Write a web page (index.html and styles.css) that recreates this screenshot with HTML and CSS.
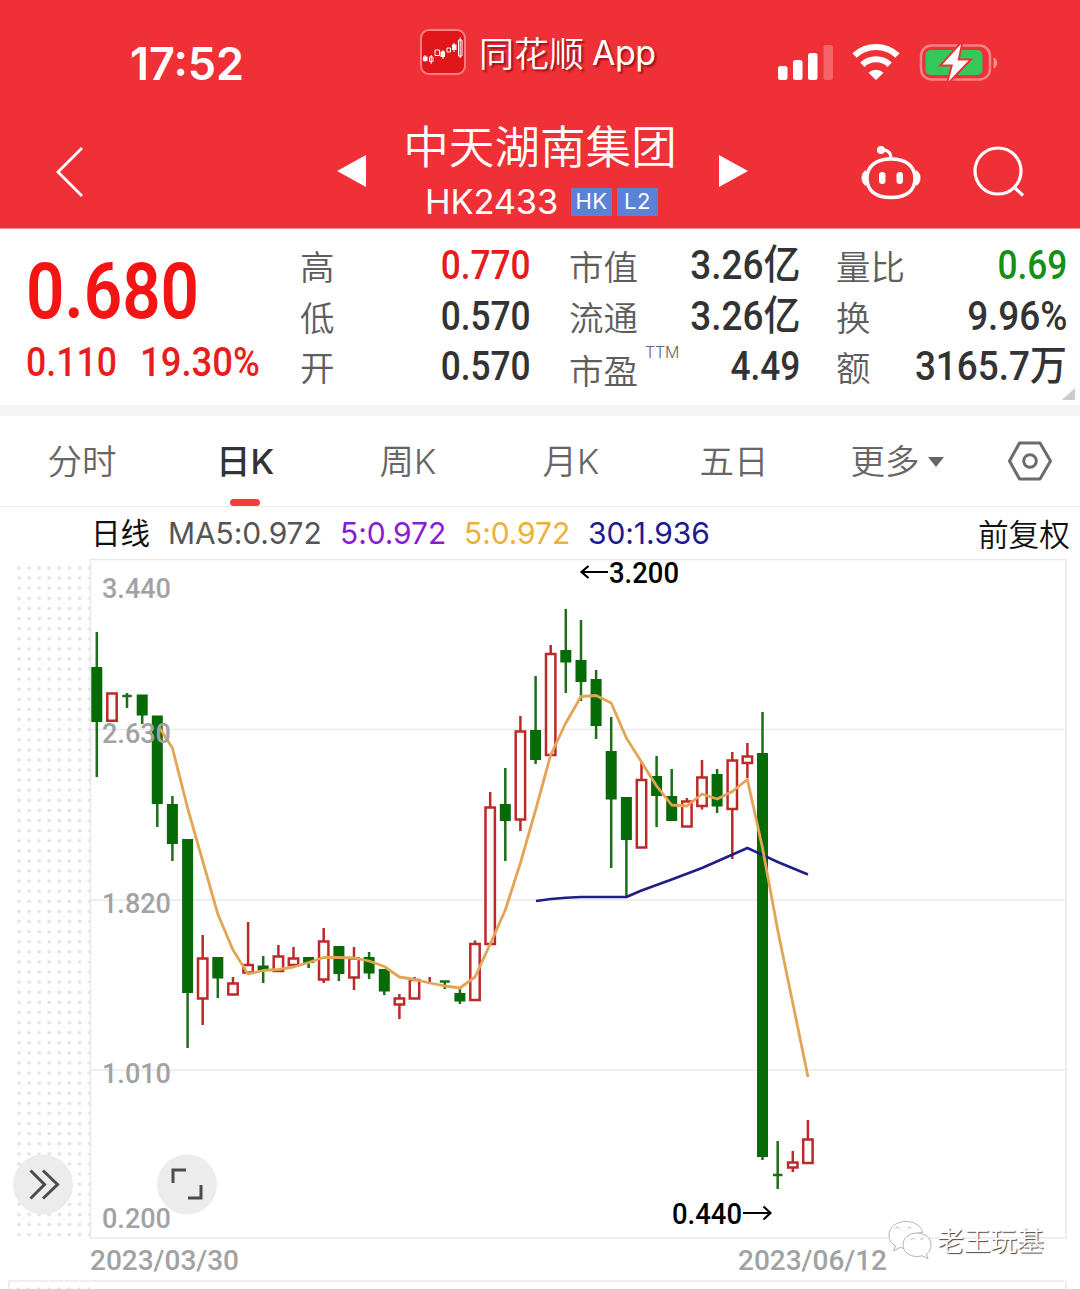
FILE: index.html
```html
<!DOCTYPE html>
<html lang="zh-CN">
<head>
<meta charset="utf-8">
<title>中天湖南集团 HK2433</title>
<link rel="stylesheet" href="styles.css">
</head>
<body>
<header class="header">
  <div class="status">
    <div class="clock">17:52</div>
    <div class="brand">
      <svg class="logo" width="46" height="46" viewBox="0 0 46 46">
        <rect x="1" y="1" width="44" height="44" rx="8" fill="#e0161b" stroke="#fb7f80" stroke-width="2"/>
        <path d="M5 26v7M23 21v9M34 14v9" stroke="#fff" stroke-width="1"/>
        <path d="M3 27.500h4.500v4.500H3zM20.500 22.500h4.500v5.500h-4.500zM32 15.500h4.500v5.500H32z" fill="#fff"/>
        <path d="M9.500 28h3.500v4.500H9.500zM15 21h4.500v5.500H15zM27 19h3.500v4h-3.500zM38.500 11h3.500v16h-3.500zM11.200 26v9M40.200 8.500v20.500" fill="none" stroke="#fff" stroke-width="1"/>
      </svg>
      <span class="brand-name">同花顺</span><span class="brand-app">App</span>
    </div>
    <svg class="indicators" width="222" height="44" viewBox="0 0 222 44">
      <g fill="#fff">
        <rect x="0" y="24" width="9.500" height="14" rx="2.500"/>
        <rect x="15" y="18" width="9.500" height="20" rx="2.500"/>
        <rect x="30" y="11" width="9.500" height="27" rx="2.500"/>
        <rect x="45.500" y="3" width="9.500" height="35" rx="2.500" opacity=".25"/>
        <path d="M98 38l-7.500-7.300a11 11 0 0 1 15 0z"/>
      </g>
      <g fill="none" stroke="#fff" stroke-width="6.200">
        <path d="M76.500 13.500a31.500 31.500 0 0 1 43 0"/>
        <path d="M84.300 22.700a20 20 0 0 1 27.400 0"/>
      </g>
      <rect x="143" y="3.500" width="69" height="34" rx="10.500" fill="none" stroke="#fff" stroke-opacity=".4" stroke-width="2.500"/>
      <rect x="147.500" y="8" width="57" height="25" rx="5" fill="#34c759"/>
      <path d="M215.500 15.500c5 1.500 5 9.500 0 11z" fill="#fff" opacity=".45"/>
      <path d="M183 2L164.500 22.500h10.500l-4.500 17L190.500 18.500h-11z" fill="#fff" stroke="#ef3037" stroke-width="4" paint-order="stroke"/>
    </svg>
  </div>
  <nav class="nav">
    <svg class="back" width="30" height="52" viewBox="0 0 30 52"><path d="M27 2L3 26l24 24" fill="none" stroke="#fff" stroke-width="2.800"/></svg>
    <svg class="prev" width="29" height="32" viewBox="0 0 29 32"><path d="M29 0v32L0 16z" fill="#fff"/></svg>
    <div class="title">
      <h1>中天湖南集团</h1>
      <div class="code"><span class="ticker">HK2433</span><span class="tag">HK</span><span class="tag">L2</span></div>
    </div>
    <svg class="next" width="29" height="32" viewBox="0 0 29 32"><path d="M0 0v32l29-16z" fill="#fff"/></svg>
    <svg class="robot" width="60" height="56" viewBox="0 0 60 56">
      <g fill="none" stroke="#fff" stroke-width="3.500">
        <path d="M30 14c16 0 24 8 24 19.500S46 52.500 30 52.500 6 45 6 33.500 14 14 30 14z"/>
        <path d="M20 4.500c6 0 10 2 10 9" stroke-width="3"/>
      </g>
      <circle cx="20" cy="5" r="4" fill="#fff"/>
      <path d="M5 25c-6 3-6 13 0 16zM55 25c6 3 6 13 0 16z" fill="#fff"/>
      <rect x="18" y="27" width="6.500" height="12" rx="3.200" fill="#fff"/>
      <rect x="35.500" y="27" width="6.500" height="12" rx="3.200" fill="#fff"/>
    </svg>
    <svg class="search" width="52" height="52" viewBox="0 0 52 52"><g fill="none" stroke="#fff" stroke-width="3.200"><circle cx="25" cy="25" r="23"/><path d="M41 41l9 8.500"/></g></svg>
  </nav>
</header>

<section class="quote">
  <div class="price">
    <div class="last"><span class="num num-xl">0.680</span></div>
    <div class="change"><span class="num num-l">0.110</span><span class="num num-l pct">19.30%</span></div>
  </div>
  <dl class="stats stats-a">
    <div><dt>高</dt><dd class="num up">0.770</dd></div>
    <div><dt>低</dt><dd class="num">0.570</dd></div>
    <div><dt>开</dt><dd class="num">0.570</dd></div>
  </dl>
  <dl class="stats stats-b">
    <div><dt>市值</dt><dd class="num unit">3.26亿</dd></div>
    <div><dt>流通</dt><dd class="num unit">3.26亿</dd></div>
    <div><dt class="low">市盈<sup>TTM</sup></dt><dd class="num">4.49</dd></div>
  </dl>
  <dl class="stats stats-c">
    <div><dt>量比</dt><dd class="num down">0.69</dd></div>
    <div><dt>换</dt><dd class="num unit">9.96%</dd></div>
    <div><dt>额</dt><dd class="num unit">3165.7万</dd></div>
  </dl>
  <i class="corner"></i>
</section>

<div class="tabs">
  <span>分时</span>
  <span class="active">日K</span>
  <span>周K</span>
  <span>月K</span>
  <span>五日</span>
  <span>更多<i class="caret"></i></span>
  <svg width="46" height="42" viewBox="0 0 46 42"><g fill="none" stroke="#6b6b6b" stroke-width="3"><path d="M12.500 3h20.500l10.500 18L33 39H12.500L2.500 21z" stroke-linejoin="round"/><circle cx="23" cy="21" r="6.300"/></g></svg>
</div>

<div class="legend">
  <span class="period">日线</span>
  <span class="ma">MA5:0.972</span>
  <span class="ma violet">5:0.972</span>
  <span class="ma amber">5:0.972</span>
  <span class="ma navy">30:1.936</span>
  <span class="adjust">前复权</span>
</div>

<section class="chart">
  <svg class="plot" width="1080" height="731" viewBox="0 558 1080 731">
    <defs>
      <pattern id="dots" x="14" y="563" width="10.100" height="10.100" patternUnits="userSpaceOnUse"><circle cx="5" cy="5" r="1.900" fill="#e4e4e4"/></pattern>
    </defs>
    <rect x="14" y="563" width="76" height="675" fill="url(#dots)"/>
    <path d="M14 1288.500H90" stroke="#e4e4e4" stroke-width="2" stroke-dasharray="3 7.100" stroke-dashoffset="-3"/>
    <path d="M90.500 559.500H1066V1238H90.500zM90 729.500H1066M90 900H1066M90 1070H1066M9 1289V1281H1064M1066 1281V1289" fill="none" stroke="#e9e9e9" stroke-width="1.600"/>

    <!-- falling days: wicks, then bodies -->
    <path class="fall" d="M96.800 632V777M127 693V708M142.200 700V724M157.300 720V827M172.400 796V861M187.600 845V1048M217.800 960V998M263.200 956V983M308.600 958V968M338.900 950V981M369.100 952V979M384.300 970V995M444.800 981V989M459.900 989V1004M505.300 768V861M535.600 676V764M565.800 609V693M581 620V701M596.100 670V739M611.200 717V868M626.400 800V896M656.600 756V827M671.700 769V820M717.100 769V813M762.500 712V1160M777.700 1141V1189"/>
    <path class="fall-body" d="M96.800 667V722M142.200 694.500V715.500M157.300 715.500V804M172.400 804V844M187.600 839V993M217.800 957V978.500M263.200 965.500V971M308.600 957V963M338.900 946V974M369.100 957V973.500M384.300 969V991.500M459.900 993V1001.500M505.300 804V821M535.600 730V760M565.800 650V662.500M581 660V682M596.100 679V726M611.200 751V799.500M626.400 797V840M656.600 776V796M671.700 796V821M717.100 774V806.500M762.500 753V1157"/>
    <path class="fall" d="M122.300 696H131.800M439.800 981.500H449.800M773 1175H782.500"/>

    <!-- rising days: wicks, then hollow bodies -->
    <path class="rise" d="M202.700 935V958M202.700 999V1025M233 977V983M248.100 922V965M278.400 945V956M293.500 947V958M323.700 928V941M323.700 980V983M354 947V958M354 978V990M399.400 994V998M399.400 1005V1019M414.500 977V980M429.700 977V984M475 940.500V944M490.200 792V807M520.400 716V731M520.400 820V831M550.700 645V654M641.500 761V780M686.900 798V801M702 760V777M702 807V809.500M732.300 752V760M732.300 810V859M747.400 743V757M747.400 764V778M792.800 1151V1162M792.800 1168V1172M807.900 1120V1139"/>
    <path class="rise" d="M107.300 693.500h9.400v27.300h-9.400zM198 958.500h9.400v40h-9.400zM228.300 983.500h9.400v11h-9.400zM243.400 965h9.400v7.500h-9.400zM273.700 956.500h9.400v14.500h-9.400zM288.800 958.500h9.400v6.500h-9.400zM319 941.500h9.400v38h-9.400zM349.300 958.500h9.400v19h-9.400zM394.700 998.500h9.400v6h-9.400zM409.800 980h9.400v18.500h-9.400zM470.300 944h9.400v56h-9.400zM485.500 807.500h9.400v136.500h-9.400zM515.700 731.500h9.400v88h-9.400zM546 654h9.400v101h-9.400zM636.800 780h9.400v67.500h-9.400zM682.200 801.500h9.400v25h-9.400zM697.300 777.500h9.400v28.500h-9.400zM727.600 760.500h9.400v48.500h-9.400zM742.700 756.500h9.400v6.500h-9.400zM788.100 1162.500h9.400v5h-9.400zM803.200 1139.500h9.400v23.500h-9.400z"/>

    <path class="ma30-line" d="M536 901L551 899Q566 897.500 581 897L626.400 897L641.500 890.500L671.700 879.500L702 868L747.400 848L777.700 862L808 874.500"/>
    <path class="ma5-line" d="M159 727L172.400 748L187.600 808L202.700 861L217.800 914L233 950L248.100 974L263.200 970.500L278.400 969.500L293.500 967L308.600 962.500L323.700 957.500L338.900 957.500L354 958L369.100 961L384.300 966.500L399.400 977L414.500 979.500L429.700 983L444.800 986L459.900 988L475 977L490.200 944L505.300 910L520.400 863L535.600 810L550.700 755L565.800 723L581 696.500L596.100 695.500L611.200 703L626.400 738L641.500 762L656.600 786L671.700 805L686.900 806L702 794L717.100 799L732.300 791.500L747.400 779.500L762.500 848L777.700 930L808 1077"/>

    <g class="axis">
      <text x="102" y="597.500" textLength="69" lengthAdjust="spacingAndGlyphs">3.440</text>
      <text x="102" y="742.500" textLength="69" lengthAdjust="spacingAndGlyphs">2.630</text>
      <text x="102" y="912.500" textLength="69" lengthAdjust="spacingAndGlyphs">1.820</text>
      <text x="102" y="1083" textLength="69" lengthAdjust="spacingAndGlyphs">1.010</text>
      <circle cx="187" cy="1184.500" r="30" fill="#ececec"/>
      <text x="102" y="1228" textLength="69" lengthAdjust="spacingAndGlyphs">0.200</text>
      <text x="90" y="1270" textLength="149" lengthAdjust="spacingAndGlyphs">2023/03/30</text>
      <text x="738" y="1270" textLength="149" lengthAdjust="spacingAndGlyphs">2023/06/12</text>
    </g>
    <g class="extreme">
      <text x="609" y="583" textLength="70" lengthAdjust="spacingAndGlyphs">3.200</text>
      <text x="672" y="1223.500" textLength="70" lengthAdjust="spacingAndGlyphs">0.440</text>
      <path d="M608 572H582M588.500 566L581.500 572L588.500 578M743 1213H769M763.500 1206.500L770.500 1213L763.500 1219.500"/>
    </g>

    <circle cx="43" cy="1184.500" r="30" fill="#ececec"/>
    <g fill="none" stroke="#4c4c4c" stroke-width="3">
      <path d="M30.500 1170.500L44.500 1184.500L30.500 1198.500M43 1170.500L57.500 1184.500L43 1198.500"/>
      <path d="M173 1183V1170H186M201 1185V1198H188"/>
    </g>

    <g class="wechat">
      <path d="M906 1221.500c-10 0-17 6-17 13.500 0 5 2.500 8.500 6.500 11l-2 5 6.500-3.500c2 .6 4 .8 6 .8l1-.2c-1-8 6-15.500 15.500-15.500-1-6.500-8-11.100-16.500-11.100z"/>
      <path d="M917 1233c-8 0-14 5.200-14 11.800s6 11.700 14 11.700c2 0 3.500-.3 5-.8l6 3-1.500-4.700c3-2.300 4.500-5.500 4.500-9.200 0-6.600-6-11.800-14-11.800z"/>
      <path d="M895.500 1228.500q2-3 4 0M907.500 1228.500q2-3 4 0M911 1239.500q1.500-2.500 3.500 0M920 1239.500q1.500-2.500 3.500 0"/>
    </g>
    <text class="watermark" x="937" y="1251" textLength="107">老王玩基</text>
  </svg>
</section>
</body>
</html>
```
FILE: styles.css
```css
* { box-sizing: border-box; }
body {
  margin: 0;
  width: 1080px;
  height: 1289px;
  overflow: hidden;
  background: #fff;
  color: #333;
  font-family: Inter, "Noto Sans CJK SC", sans-serif;
}
h1, dl, dd { margin: 0; }
svg { display: block; flex: none; }

/* header */
.header { height: 229px; background: #ef3037; color: #fff; border-bottom: 1px solid #f58a8e; }
.status {
  display: grid;
  grid-template-columns: 290px 357px 1fr;
  padding: 29px 0 0 130px;
  height: 119px;
  align-items: start;
}
.clock { padding-top: 13px; font-size: 45px; line-height: 44px; font-weight: 600; }
.brand { display: flex; align-items: flex-start; }
.brand-name, .brand-app { font-size: 35px; line-height: 46px; text-shadow: 2px 2px 2px rgba(90, 0, 0, .6); }
.brand-name { margin-left: 13px; font-family: "Noto Sans CJK SC", sans-serif; font-weight: 350; }
.brand-app { margin-left: 8px; padding-top: 1px; font-size: 34px; letter-spacing: -.5px; }
.indicators { margin: 13px 0 0 1px; }
.nav {
  display: grid;
  grid-template-columns: 282px 29px 353px 142px 112px 1fr;
  padding-left: 55px;
}
.back { margin-top: 27px; }
.prev, .next { margin-top: 36px; }
.title { display: flex; flex-direction: column; align-items: center; padding-right: 5px; }
.title h1 { margin-top: -3px; font: 350 45.600px/56px "Noto Sans CJK SC", sans-serif; white-space: nowrap; }
.code { display: flex; align-items: center; height: 28px; margin: 16px 0 0 3px; gap: 5px; }
.ticker { width: 133px; margin: -1px 8px 0 0; font-size: 34.500px; line-height: 28px; letter-spacing: -.2px; font-weight: 400; white-space: nowrap; }
.tag { width: 41px; height: 28px; background: #5a82d6; font-size: 22px; line-height: 27px; text-align: center; letter-spacing: .5px; }
.robot { margin-top: 26px; }
.search { margin-top: 27px; }

/* quote */
.quote {
  position: relative;
  height: 187px;
  border-bottom: 11px solid #f5f5f5;
  padding-top: 11px;
  display: grid;
  grid-template-columns: 300px 231px 38px 231px 36px 231px;
}
.stats-a { grid-column: 2; }
.stats-b { grid-column: 4; }
.stats-c { grid-column: 6; }
.price { padding-left: 26px; color: #f51414; }
.last { height: 99px; padding-top: 12px; }
.change { display: flex; height: 46px; color: #ea1d1d; }
.num { display: inline-block; font-family: Roboto, "Noto Sans CJK SC", sans-serif; font-weight: 500; white-space: nowrap; transform-origin: left center; transform: scaleX(.86); }
.num-xl { font-size: 77px; line-height: 80px; font-weight: 600; transform: scaleX(.875); }
.num-l { width: 114px; font-size: 40.500px; line-height: 46px; transform: scaleX(.88); }
.pct { transform: scaleX(.9); }
.stats div { display: flex; justify-content: space-between; height: 50.500px; line-height: 50px; }
.stats dt { position: relative; font: 350 34.500px/50px "Noto Sans CJK SC", sans-serif; color: #5e5e5e; white-space: nowrap; }
.stats dt.low { padding-top: 3px; }
.stats dd { font-size: 41px; transform-origin: right center; }
.stats .unit { transform: scaleX(.9); }
.stats sup { position: absolute; left: 76px; top: 1px; font: 350 16px/20px Inter, sans-serif; letter-spacing: -.2px; color: #666; }
.stats .up { color: #e51c1c; }
.stats .down { color: #158f15; }
.corner { position: absolute; right: 5px; bottom: 5px; border-left: 13px solid transparent; border-bottom: 12px solid #ccc; }

/* period tabs */
.tabs {
  display: grid;
  grid-template-columns: repeat(6, 163px) 1fr;
  height: 91px;
  border-bottom: 1.500px solid #ebebeb;
  align-items: center;
  color: #666;
}
.tabs span {
  position: relative;
  height: 90px;
  display: flex;
  align-items: center;
  justify-content: center;
  padding: 2px 0 0 1px;
  font: 350 34.500px/88px Inter, "Noto Sans CJK SC", sans-serif;
}
.tabs svg { margin-left: 29px; }
.tabs .active { color: #333; font-weight: 500; }
.tabs .active::after { content: ""; position: absolute; left: 67px; bottom: 0; width: 30px; height: 7.500px; border-radius: 4px; background: #ee4038; }
.caret { margin-left: 8px; border: 8px solid transparent; border-top: 10px solid #666; border-bottom: 0; }

/* moving-average legend */
.legend { display: flex; height: 51px; align-items: center; padding: 0 10px 0 91px; font-size: 30px; line-height: 51px; color: #111; }
.period { width: 77px; padding-top: 2px; font-size: 29.500px; }
.ma { padding-top: 1px; font-weight: 400; letter-spacing: -.1px; color: #555; white-space: nowrap; width: 172px; }
.legend .violet { width: 124px; color: #8a1cd0; }
.legend .amber { width: 124px; color: #edb03a; }
.legend .navy { width: auto; color: #1c1a90; }
.adjust { margin-left: auto; padding-top: 4px; font-size: 30.700px; font-weight: 350; }

/* candlestick chart */
.plot { overflow: visible; }
.plot text { font-family: Roboto, sans-serif; }
.fall { fill: none; stroke: #1d6d1a; stroke-width: 2.500; }
.fall-body { fill: none; stroke: #066a06; stroke-width: 11; }
.rise { fill: #fff; stroke: #bd2929; stroke-width: 2.500; }
.ma5-line { fill: none; stroke: #e3a455; stroke-width: 2.800; stroke-linejoin: round; }
.ma30-line { fill: none; stroke: #201c88; stroke-width: 2.500; stroke-linejoin: round; }
.axis text { font-size: 28.500px; font-weight: 500; fill: #a2a2a2; }
.extreme text { font-size: 29.500px; font-weight: 500; fill: #000; }
.extreme path { fill: none; stroke: #000; stroke-width: 2.200; }
.wechat { fill: #fff; stroke: #aaa; stroke-width: .9; }
.plot .watermark { font: 350 27px "Noto Sans CJK SC", sans-serif; fill: #fff; text-shadow: 1px 1px 1px #444; }
```
